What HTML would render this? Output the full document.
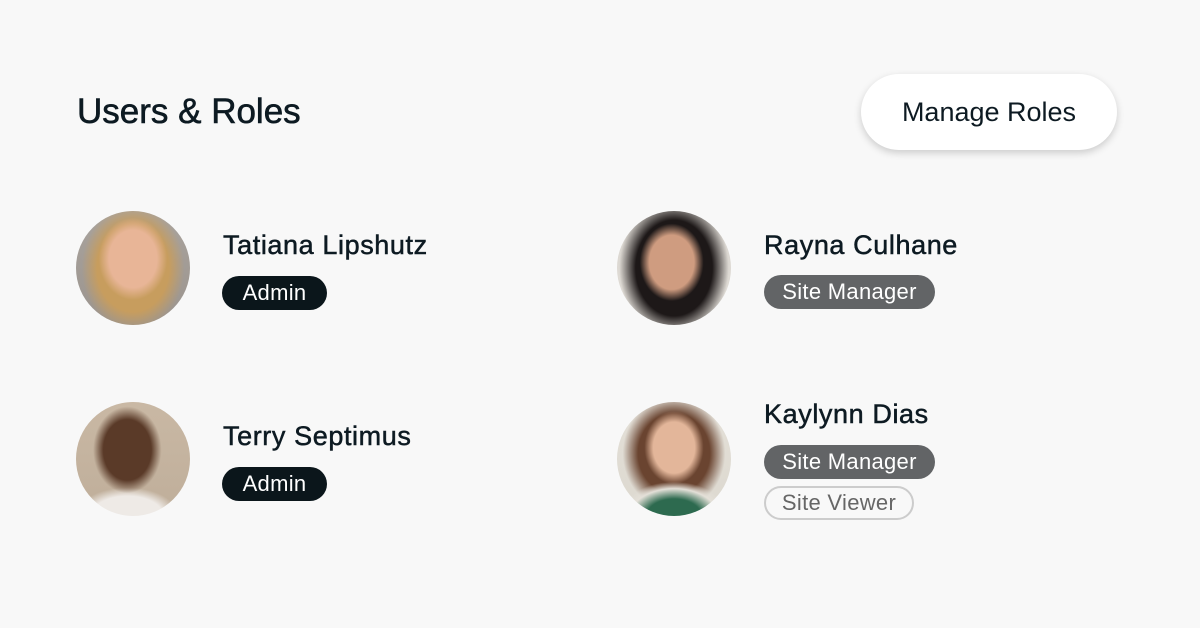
<!DOCTYPE html>
<html><head><meta charset="utf-8"><style>
*{margin:0;padding:0;box-sizing:border-box}
body{width:1200px;height:628px;background:#f8f8f8;font-family:"Liberation Sans",sans-serif;position:relative;overflow:hidden;color:#0d1a22}
h1{position:absolute;left:77px;top:92px;font-size:35px;font-weight:normal;letter-spacing:0px;-webkit-text-stroke:0.6px #0d1a22}
.btn{position:absolute;left:861px;top:74px;width:256px;height:76px;background:#fff;border-radius:38px;box-shadow:0 3px 8px rgba(0,0,0,.18);font-size:27px;text-align:center;line-height:76px}
.av{position:absolute;width:114px;height:114px;border-radius:50%;overflow:hidden}
.name{position:absolute;font-size:27px;letter-spacing:0.6px;-webkit-text-stroke:0.5px #0d1a22;white-space:nowrap}
.badge{position:absolute;height:34px;border-radius:17px;font-size:22px;letter-spacing:0.3px;line-height:34px;text-align:center;color:#fff}
.admin{background:#0b161b;width:105px}
.sm{background:#626466;width:171px}
.sv{background:#f8f8f8;border:2px solid #ccc;color:#666;width:150px;line-height:30px}
</style></head><body>
<h1>Users &amp; Roles</h1>
<div class="btn">Manage Roles</div>

<div class="av" style="left:76px;top:211px;background:radial-gradient(ellipse 30% 36% at 50% 42%,#e8b597 0 70%,transparent 100%),radial-gradient(ellipse 45% 55% at 50% 50%,#c79d5e 0 70%,transparent 100%),linear-gradient(#a9a39d,#9b948e)"></div>
<div class="av" style="left:617px;top:211px;background:radial-gradient(ellipse 28% 34% at 48% 45%,#cf9c80 0 70%,transparent 100%),radial-gradient(ellipse 48% 60% at 50% 50%,#1d1818 0 70%,transparent 100%),linear-gradient(#d8d4ce,#e2ded8)"></div>
<div class="av" style="left:76px;top:402px;background:radial-gradient(ellipse 30% 38% at 45% 42%,#5a3a28 0 70%,transparent 100%),radial-gradient(ellipse 45% 25% at 45% 100%,#eeeae6 0 70%,transparent 100%),linear-gradient(#c9b8a4,#bfae9a)"></div>
<div class="av" style="left:617px;top:402px;background:radial-gradient(ellipse 26% 32% at 50% 40%,#e3b69a 0 70%,transparent 100%),radial-gradient(ellipse 48% 30% at 50% 100%,#2d6a4f 0 50%,#e4e0d8 80%,transparent 100%),radial-gradient(ellipse 45% 50% at 50% 45%,#6a4430 0 70%,transparent 100%),linear-gradient(#e4e0d8,#dcd8cf)"></div>

<div class="name" style="left:223px;top:230px">Tatiana Lipshutz</div>
<div class="badge admin" style="left:222px;top:276px">Admin</div>

<div class="name" style="left:764px;top:230px">Rayna Culhane</div>
<div class="badge sm" style="left:764px;top:275px">Site Manager</div>

<div class="name" style="left:223px;top:421px">Terry Septimus</div>
<div class="badge admin" style="left:222px;top:467px">Admin</div>

<div class="name" style="left:764px;top:399px">Kaylynn Dias</div>
<div class="badge sm" style="left:764px;top:445px">Site Manager</div>
<div class="badge sv" style="left:764px;top:486px">Site Viewer</div>
</body></html>
